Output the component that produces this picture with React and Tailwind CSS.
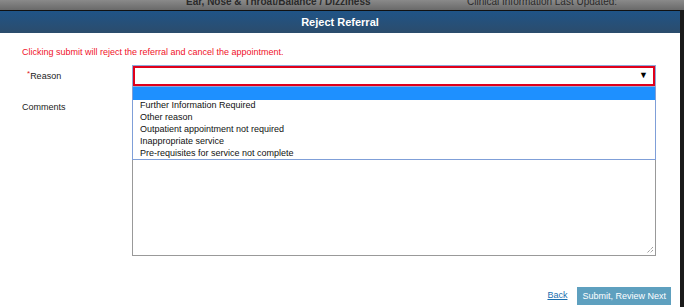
const reasons = [
  "Further Information Required",
  "Other reason",
  "Outpatient appointment not required",
  "Inappropriate service",
  "Pre-requisites for service not complete",
];

export default function App() {
  return (
    <div className="w-[684px] h-[307px] overflow-hidden bg-[#6f6f6f] font-['Liberation_Sans',Arial,sans-serif] flex flex-col">
      {/* page behind the overlay */}
      <div className="h-[10px] shrink-0 relative bg-gradient-to-b from-[#8a8a8a] to-[#6a6a6a] text-[#2a2a2a] text-[10px] leading-[10px]">
        <span className="absolute left-[186px] top-[-3px] font-bold">Ear, Nose &amp; Throat/Balance / Dizziness</span>
        <span className="absolute left-[467px] top-[-3px]">Clinical Information Last Updated:</span>
      </div>
      <div className="flex-1 flex">
        <div className="w-[680px] bg-white flex flex-col border-t border-[#111]">
          <div className="h-[22px] bg-gradient-to-b from-[#1f5487] to-[#2b4c6c] flex items-center justify-center text-white font-bold text-[11px]">
            Reject Referral
          </div>
          <div className="flex-1 flex flex-col pl-[22px] pr-[24px] text-[9px] text-[#222]">
            <div className="mt-[13px] text-[#f0102a] h-[12px] leading-[12px]">Clicking submit will reject the referral and cancel the appointment.</div>
            <div className="flex mt-[7px]">
              <div className="w-[110px] pl-[5px] pt-[5px] flex">
                <span className="text-[#e02020] text-[8px] leading-[8px]">*</span>
                <span className="leading-[12px]">Reason</span>
              </div>
              <div className="w-[524px]">
                <div className="h-[22px] border border-[#8fa8d8]">
                  <div className="h-full border-2 border-[#e0001b] flex items-center justify-end pr-[5px] text-[9px] text-black">
                    ▼
                  </div>
                </div>
                <div className="border-x border-b border-[#7f9fd8] h-[73px]">
                  <div className="h-[13px] bg-[#1e90ff]" />
                  <div className="pl-[7px] text-[#111]">
                    {reasons.map((r) => (
                      <div key={r} className="h-[12px] leading-[11px]">{r}</div>
                    ))}
                  </div>
                </div>
                <div className="h-[96px] border-x border-b border-[#999] relative">
                  <svg className="absolute right-[1px] bottom-[1px]" width="9" height="9" viewBox="0 0 9 9">
                    <path d="M8 2 L2 8 M8 5 L5 8" stroke="#777" strokeWidth="1" strokeDasharray="1 1" />
                  </svg>
                </div>
              </div>
            </div>
            <div className="-mt-[155px] h-[12px] leading-[12px]">Comments</div>
            <div className="mt-auto mb-[2px] flex items-center justify-end gap-[10px] -mr-[15px]">
              <a href="#" className="text-[#1a6fb0] underline">Back</a>
              <button className="h-[18px] px-[5px] bg-[#5ea0bf] text-white text-[9px] leading-[18px]">Submit, Review Next</button>
            </div>
          </div>
        </div>
        <div className="w-[4px] bg-[#1a1a1a]" />
      </div>
    </div>
  );
}
